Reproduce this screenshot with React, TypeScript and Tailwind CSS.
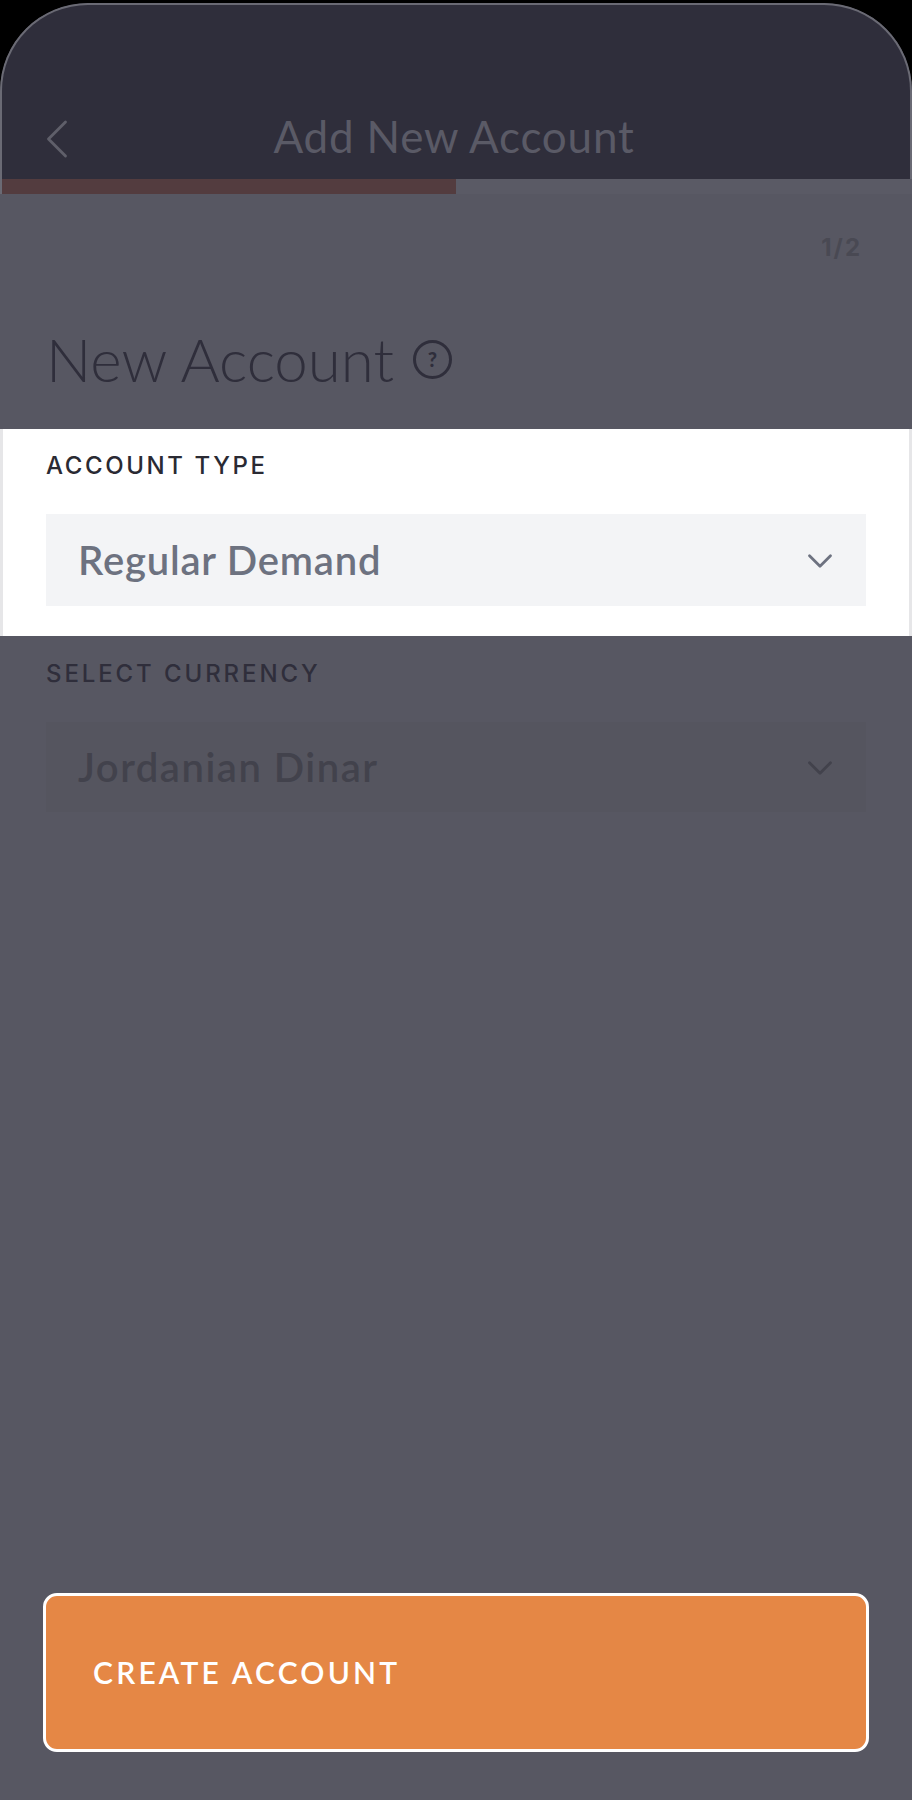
import { ChevronDown, ChevronLeft } from 'lucide-react'

export default function App() {
  return (
    <div className="w-[912px] h-[1800px] bg-black pt-[3px] font-['Lato',sans-serif]">
      <div className="h-[1797px] flex flex-col bg-[#575762] rounded-t-[88px] overflow-hidden">
        {/* Header */}
        <div className="h-[176px] shrink-0 bg-[#2f2e3b] rounded-t-[88px] border-t-2 border-x-2 border-[#6a6a74] flex items-end pb-[15px] pl-[38px] pr-[42px] relative">
          <ChevronLeft className="absolute left-[21px] bottom-[6px] w-[68px] h-[68px] text-[#5f5f6a]" strokeWidth={1} />
          <h1 className="w-full text-center text-[#5a5a66] text-[44px] leading-[56px] tracking-[0.8px]">
            Add New Account
          </h1>
        </div>

        {/* Progress bar */}
        <div className="h-[15px] shrink-0 bg-[#5a5a65] border-l-2 border-[#6a6a74]">
          <div className="h-full w-[454px] bg-[#533c3f]" />
        </div>

        <div className="h-[67px] shrink-0 flex items-end justify-end px-[50px] font-['Inter',sans-serif]">
          <span className="text-[#494953] text-[24px] leading-[26px] font-bold tracking-[2px]">1/2</span>
        </div>

        <div className="mt-[63px] h-[70px] shrink-0 flex items-center gap-[19px] px-[46px]">
          <span className="text-[#2f2e3b] text-[60px] leading-[70px] font-light">New Account</span>
          <span className="w-[39px] h-[39px] rounded-full border-[3px] border-[#2f2e3b] flex items-center justify-center text-[#2f2e3b] text-[20px] font-black leading-none">
            ?
          </span>
        </div>

        {/* Account type, highlighted */}
        <div className="mt-[35px] h-[207px] shrink-0 bg-white border-x-[3px] border-[#e6e6e8] pt-[24px] px-[43px]">
          <div className="font-['Inter',sans-serif] text-[24px] leading-[26px] font-medium tracking-[2.6px] text-[#2a2a33]">
            ACCOUNT TYPE
          </div>
          <div className="mt-[35px] h-[92px] w-[820px] bg-[#f3f4f6] flex items-center justify-between pl-[32px] pr-[25px]">
            <span className="text-[#6d7280] text-[40px] leading-[46px] font-semibold tracking-[0.8px]">Regular Demand</span>
            <ChevronDown className="w-[42px] h-[42px] mt-[2px] text-[#6d7280]" strokeWidth={1.6} />
          </div>
        </div>

        {/* Select currency, dimmed */}
        <div className="pt-[25px] px-[46px]">
          <div className="font-['Inter',sans-serif] text-[24px] leading-[26px] font-medium tracking-[2.9px] text-[#2f2e3b]">
            SELECT CURRENCY
          </div>
          <div className="mt-[35px] h-[90px] w-[820px] bg-[#55555f] flex items-center justify-between pl-[32px] pr-[25px]">
            <span className="text-[#42424c] text-[40px] leading-[46px] font-semibold tracking-[1.5px]">Jordanian Dinar</span>
            <ChevronDown className="w-[42px] h-[42px] mt-[2px] text-[#42424c]" strokeWidth={1.6} />
          </div>
        </div>

        {/* Bottom button */}
        <div className="mt-auto px-[43px] pb-[48px]">
          <button className="w-[826px] h-[159px] rounded-[14px] border-[3px] border-white bg-[#e58745] flex items-center px-[47px] text-white text-[30px] font-semibold tracking-[3.2px]">
            CREATE ACCOUNT
          </button>
        </div>
      </div>
    </div>
  )
}
